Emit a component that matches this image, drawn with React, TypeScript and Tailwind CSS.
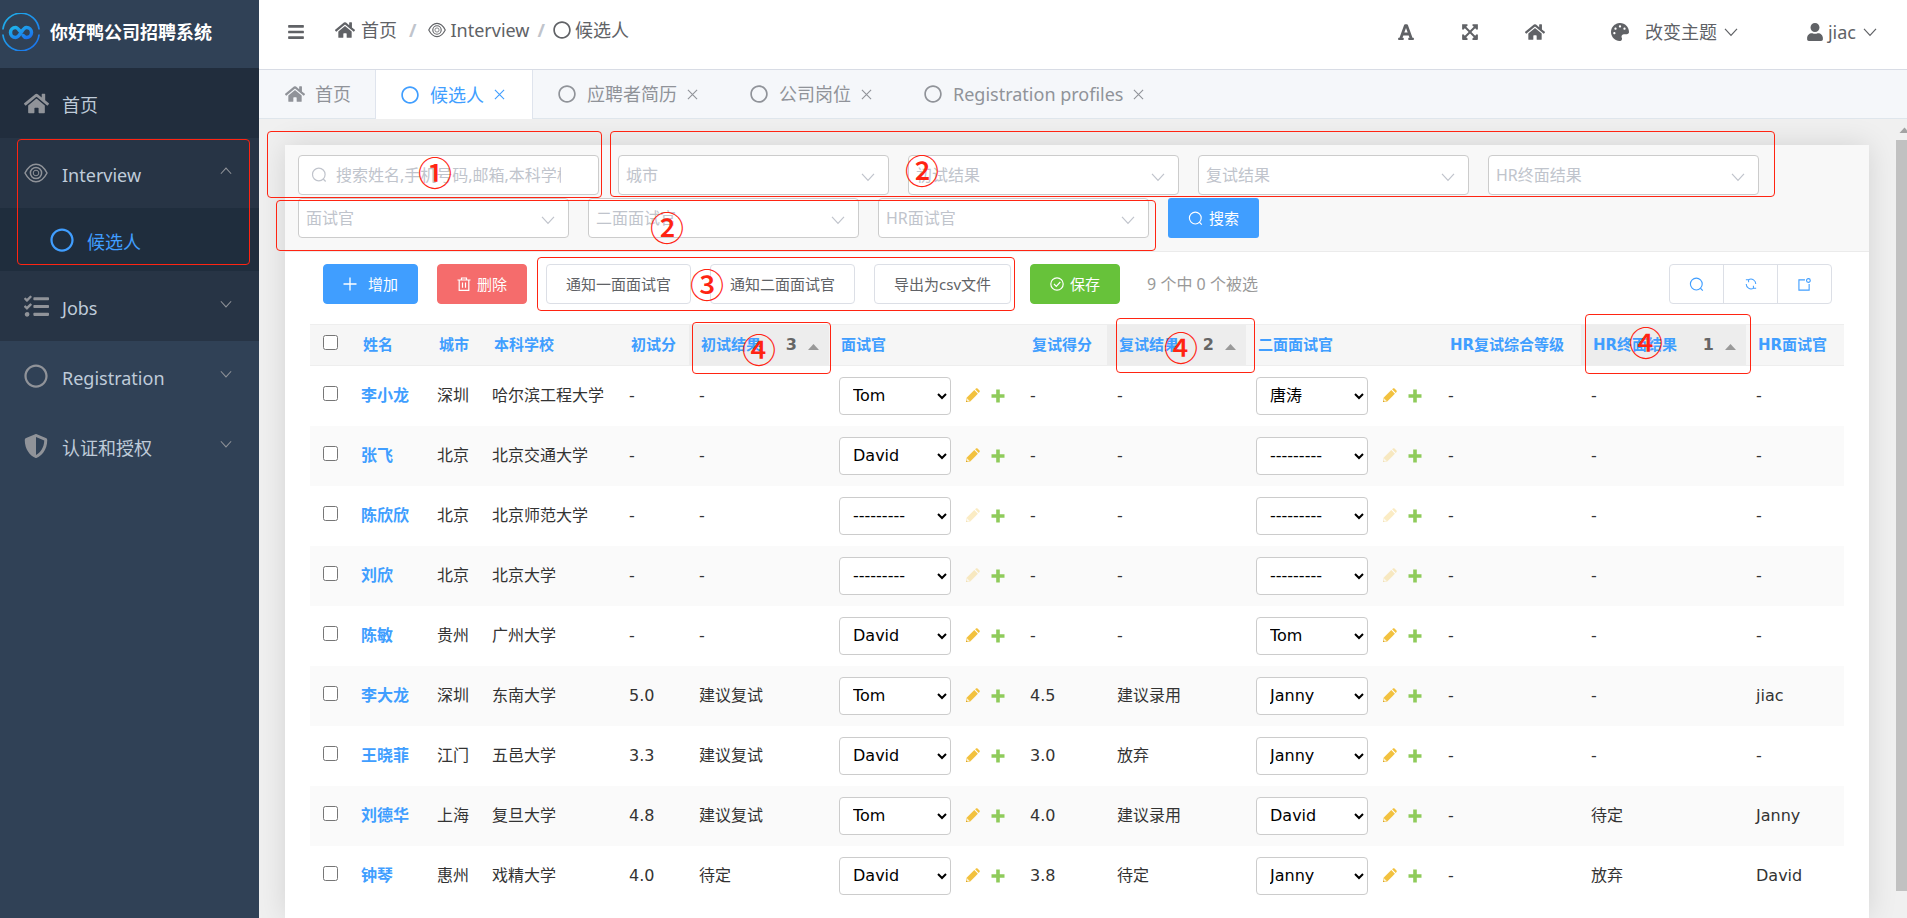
import type { ReactNode } from 'react';
import {
  FaBars,
  FaExpandArrowsAlt,
  FaFont,
  FaHome,
  FaPalette,
  FaRegCircle,
  FaShieldAlt,
  FaTasks,
  FaUser,
} from 'react-icons/fa';

type IconProps = { className?: string };

function Chevron({ className = '' }: IconProps) {
  return (
    <svg viewBox="0 0 14 14" className={className} fill="none" stroke="currentColor" strokeWidth="1.200" aria-hidden="true">
      <path d="M1 3.800 7 10.400 13 3.800" />
    </svg>
  );
}

function EyeIcon({ className = '' }: IconProps) {
  return (
    <svg viewBox="0 0 24 24" className={className} fill="none" stroke="currentColor" strokeWidth="1.500" aria-hidden="true">
      <path d="M1 12C4 6.200 7.800 3.200 12 3.200S20 6.200 23 12c-3 5.800-6.800 8.800-11 8.800S4 17.800 1 12z" />
      <circle cx="12" cy="12" r="5.600" />
      <circle cx="12" cy="12" r="2.800" strokeWidth="1" />
    </svg>
  );
}

function SearchIcon({ className = '' }: IconProps) {
  return (
    <svg viewBox="0 0 16 16" className={className} fill="none" stroke="currentColor" strokeWidth="1.200" aria-hidden="true">
      <circle cx="7.800" cy="7.500" r="6.300" />
      <path d="m12.200 12 2.500 2.500" />
    </svg>
  );
}

function CloseIcon({ className = '' }: IconProps) {
  return (
    <svg viewBox="0 0 12 12" className={className} fill="none" stroke="currentColor" strokeWidth="1.200" aria-hidden="true">
      <path d="m1 1 10 10M11 1 1 11" />
    </svg>
  );
}

function PlusIcon({ className = '' }: IconProps) {
  return (
    <svg viewBox="0 0 14 14" className={className} fill="none" stroke="currentColor" strokeWidth="1.300" aria-hidden="true">
      <path d="M7 .5v13M.5 7h13" />
    </svg>
  );
}

function TrashIcon({ className = '' }: IconProps) {
  return (
    <svg viewBox="0 0 14 14" className={className} fill="none" stroke="currentColor" strokeWidth="1.200" aria-hidden="true">
      <path d="M.5 3h13M4.500 3V1h5v2M2.200 3v10.300h9.600V3M5.500 5.500v5.300M8.500 5.500v5.300" />
    </svg>
  );
}

function CheckCircleIcon({ className = '' }: IconProps) {
  return (
    <svg viewBox="0 0 14 14" className={className} fill="none" stroke="currentColor" strokeWidth="1.200" aria-hidden="true">
      <circle cx="7" cy="7" r="6.200" />
      <path d="m4 7 2.300 2.300L10.300 5" />
    </svg>
  );
}

function RefreshIcon({ className = '' }: IconProps) {
  return (
    <svg viewBox="0 0 14 14" className={className} fill="none" stroke="currentColor" strokeWidth="1.200" aria-hidden="true">
      <path d="M4.500 1.800A5.800 5.800 0 0 1 12.600 7M9.500 12.200A5.800 5.800 0 0 1 1.400 7M1 2h3.200v3M13 12H9.800V9" />
    </svg>
  );
}

function ShareIcon({ className = '' }: IconProps) {
  return (
    <svg viewBox="0 0 14 14" className={className} fill="none" stroke="currentColor" strokeWidth="1.200" aria-hidden="true">
      <path d="M7.500 2H1v11h11V6.500" />
      <circle cx="11.200" cy="2.700" r="2" />
    </svg>
  );
}

function PencilIcon({ className = '' }: IconProps) {
  return (
    <svg viewBox="0 0 15 15" className={className} aria-hidden="true">
      <path d="M1 14l.6-4.200L9.300 2.100l3.600 3.600-7.700 7.700z" fill="#f2c13e" />
      <path d="M10.100 1.300 11 .5c.5-.5 1-.5 1.500 0l2 2c.5.500.5 1 0 1.500l-.8.900z" fill="#f2c13e" />
      <path d="M1.900 10.300 4.700 13l-2.600.600-.7-.7z" fill="#fdf3d3" />
      <path d="M1 14l.3-1.700 1.400 1.400z" fill="#d69f1e" />
    </svg>
  );
}

function AddIcon({ className = '' }: IconProps) {
  return (
    <svg viewBox="0 0 14 14" className={className} aria-hidden="true">
      <path d="M5.200.5h3.600v4.700h4.700v3.600H8.800v4.700H5.200V8.800H.5V5.200h4.700z" fill="#8fcb5b" />
    </svg>
  );
}

function Logo() {
  return (
    <svg viewBox="0 0 38 38" className="h-[38px] w-[38px] shrink-0" fill="none" aria-hidden="true">
      <defs>
        <linearGradient id="logo" x1="0" y1="0" x2="1" y2="1">
          <stop offset="0" stopColor="#1fb4ea" />
          <stop offset="1" stopColor="#1a6fee" />
        </linearGradient>
      </defs>
      <path
        d="M.9 16.500A18.200 18.200 0 0 1 37.100 16.500M37.100 21.500A18.200 18.200 0 0 1 .9 21.500"
        stroke="url(#logo)"
        strokeWidth="1.700"
      />
      <path
        d="M19 19.500c-2.200-3-3.400-5-5.500-5a5 5 0 0 0 0 10c2.400 0 3.800-2 5.500-4.800s3-5.200 5.500-5.200a5 5 0 0 1 0 10c-1.300 0-2.600-.8-3.300-2"
        stroke="url(#logo)"
        strokeWidth="3.500"
        strokeLinecap="round"
      />
    </svg>
  );
}

function MenuItem({ icon, label, open, className = '' }: { icon: ReactNode; label: string; open?: boolean; className?: string }) {
  return (
    <a href="#" className={`flex h-[70px] items-center pr-[27px] pl-6 text-lg text-[#bfcbd9] ${className}`}>
      <span className="flex w-[38px] text-[25px] text-[#909399]">{icon}</span>
      <span className="grow pt-1">{label}</span>
      {open !== undefined && <Chevron className={`mb-1 size-3 text-[#909399] ${open ? 'rotate-180' : ''}`} />}
    </a>
  );
}

function Sidebar() {
  return (
    <aside className="w-[259px] shrink-0 bg-[#304156]">
      <div className="flex h-[68px] items-center gap-[10px] pb-1 pl-[2px] text-lg font-bold whitespace-nowrap text-white">
        <Logo />
        <span>你好鸭公司招聘系统</span>
      </div>
      <nav>
        <MenuItem icon={<FaHome />} label="首页" className="bg-[#212d3d]" />
        <MenuItem icon={<EyeIcon className="size-6" />} label="Interview" open className="bg-[#273445]" />
        <a href="#" className="flex h-[63px] items-center bg-[#1f2d3d] pl-[50px] text-lg text-[#409eff]">
          <FaRegCircle className="mr-[13px] size-6" />
          <span className="pt-1">候选人</span>
        </a>
        <MenuItem icon={<FaTasks />} label="Jobs" open={false} className="bg-[#273445]" />
        <MenuItem icon={<FaRegCircle className="size-6" />} label="Registration" open={false} />
        <MenuItem icon={<FaShieldAlt className="size-6" />} label="认证和授权" open={false} />
      </nav>
    </aside>
  );
}

function Header() {
  return (
    <header className="flex h-[70px] items-center border-b border-[#d8dce5] bg-white pr-[30px] pb-1.5 pl-7 text-lg text-[#606266]">
      <button type="button" aria-label="Menu" className="mr-[30px] text-lg">
        <FaBars />
      </button>
      <nav className="flex items-center pb-1">
        <FaHome className="mr-1.5 text-xl" />
        <span>首页</span>
        <span className="mx-3 font-bold text-[#c0c4cc]">/</span>
        <EyeIcon className="mr-1 size-[18px]" />
        <span>Interview</span>
        <span className="mx-2 font-bold text-[#c0c4cc]">/</span>
        <FaRegCircle className="mr-1 size-[18px]" />
        <span>候选人</span>
      </nav>
      <div className="ml-auto flex items-center">
        <button type="button" aria-label="Font size" className="mr-[46px] text-lg">
          <FaFont />
        </button>
        <button type="button" aria-label="Full screen" className="mr-[46px] text-lg">
          <FaExpandArrowsAlt />
        </button>
        <button type="button" aria-label="Home" className="mr-[66px] text-xl">
          <FaHome />
        </button>
        <button type="button" className="mr-[68px] flex items-center">
          <FaPalette className="mr-4" />
          改变主题
          <Chevron className="ml-[7px] size-[14px]" />
        </button>
        <button type="button" className="flex items-center">
          <FaUser className="mr-1" />
          jiac
          <Chevron className="ml-[7px] size-[14px]" />
        </button>
      </div>
    </header>
  );
}

const tabs = ['候选人', '应聘者简历', '公司岗位', 'Registration profiles'];

function Tabs() {
  return (
    <div className="flex h-[49px] items-stretch border-b border-[#dfe6ec] bg-[#f5f7fa] text-lg text-[#909399]">
      <button type="button" className="flex items-center pr-6 pl-[26px]">
        <FaHome className="mr-2.5 text-xl" />
        首页
      </button>
      {tabs.map((tab, i) => (
        <button
          type="button"
          key={tab}
          className={
            i === 0
              ? '-mb-px flex items-center border-x border-[#dfe4ed] bg-white pr-[27px] pl-[25px] text-[#409eff]'
              : 'flex items-center pr-[27px] pl-[25px]'
          }
        >
          <FaRegCircle className="mr-[11px] size-[18px]" />
          {tab}
          <CloseIcon className="ml-2.5 size-[11px]" />
        </button>
      ))}
    </div>
  );
}

const filters = ['城市', '初试结果', '复试结果', 'HR终面结果', '面试官', '二面面试官', 'HR面试官'];

function Filters() {
  return (
    <form className="flex flex-wrap gap-x-[19px] gap-y-[3px] border-b border-[#ebebeb] bg-[#f8f8f8] pt-2.5 pr-3 pb-[13px] pl-[13px]">
      <label className="relative block">
        <SearchIcon className="absolute top-3 left-[13px] size-4 text-[#c0c4cc]" />
        <input
          type="text"
          aria-label="搜索"
          placeholder="搜索姓名,手机号码,邮箱,本科学校"
          className="h-10 w-[301px] rounded border border-[#ccc] bg-white px-[37px] text-base placeholder:text-[#c0c4cc]"
        />
      </label>
      {filters.map((name) => (
        <label key={name} className="relative block">
          <select
            aria-label={name}
            className="h-10 w-[271px] appearance-none rounded border border-[#ccc] bg-white pl-[7px] text-base text-[#c0c4cc]"
          >
            <option>{name}</option>
          </select>
          <Chevron className="pointer-events-none absolute top-[15px] right-[14px] size-[14px] text-[#c0c4cc]" />
        </label>
      ))}
      <button
        type="button"
        className="flex h-10 items-center gap-1.5 rounded-[3px] bg-[#409eff] px-5 text-[15px] text-white"
      >
        <SearchIcon className="size-[15px]" />
        搜索
      </button>
    </form>
  );
}

function ActionButton({ icon, children, className }: { icon?: ReactNode; children: ReactNode; className: string }) {
  return (
    <button type="button" className={`flex h-10 items-center rounded border px-[19px] text-[15px] ${className}`}>
      {icon}
      {children}
    </button>
  );
}

function Toolbar() {
  return (
    <div className="flex items-center gap-[19px] pt-3 pr-[37px] pb-5 pl-[38px]">
      <ActionButton icon={<PlusIcon className="mr-[11px] size-[14px]" />} className="border-[#409eff] bg-[#409eff] text-white">
        增加
      </ActionButton>
      <ActionButton icon={<TrashIcon className="mr-1.5 size-[14px]" />} className="border-[#f56c6c] bg-[#f56c6c] text-white">
        删除
      </ActionButton>
      <ActionButton className="border-[#dcdfe6] bg-white text-[#606266]">通知一面面试官</ActionButton>
      <ActionButton className="border-[#dcdfe6] bg-white text-[#606266]">通知二面面试官</ActionButton>
      <ActionButton className="border-[#dcdfe6] bg-white text-[#606266]">导出为csv文件</ActionButton>
      <ActionButton icon={<CheckCircleIcon className="mr-1.5 size-[14px]" />} className="border-[#67c23a] bg-[#67c23a] text-white">
        保存
      </ActionButton>
      <span className="ml-2 text-base text-[#999]">9 个中 0 个被选</span>
      <div className="ml-auto flex h-10 divide-x divide-[#dcdfe6] rounded border border-[#dcdfe6] text-[#409eff]">
        <button type="button" aria-label="搜索" className="flex w-[54px] items-center justify-center">
          <SearchIcon className="size-[15px]" />
        </button>
        <button type="button" aria-label="刷新" className="flex w-[54px] items-center justify-center">
          <RefreshIcon className="size-[12px]" />
        </button>
        <button type="button" aria-label="新窗口" className="flex w-[53px] items-center justify-center">
          <ShareIcon className="size-[13px]" />
        </button>
      </div>
    </div>
  );
}

type Column = { label: string; width: string; order?: number };

const columns: Column[] = [
  { label: '姓名', width: 'w-[76px]' },
  { label: '城市', width: 'w-[55px]' },
  { label: '本科学校', width: 'w-[137px]' },
  { label: '初试分', width: 'w-[70px]' },
  { label: '初试结果', width: 'w-[140px]', order: 3 },
  { label: '面试官', width: 'w-[191px]' },
  { label: '复试得分', width: 'w-[87px]' },
  { label: '复试结果', width: 'w-[139px]', order: 2 },
  { label: '二面面试官', width: 'w-[192px]' },
  { label: 'HR复试综合等级', width: 'w-[143px]' },
  { label: 'HR终面结果', width: 'w-[165px]', order: 1 },
  { label: 'HR面试官', width: 'w-[98px]' },
];

const NONE = '---------';
const interviewers = [NONE, 'Tom', 'David', 'Janny', '唐涛'];

const rows = [
  ['李小龙', '深圳', '哈尔滨工程大学', '-', '-', 'Tom', '-', '-', '唐涛', '-', '-', '-'],
  ['张飞', '北京', '北京交通大学', '-', '-', 'David', '-', '-', NONE, '-', '-', '-'],
  ['陈欣欣', '北京', '北京师范大学', '-', '-', NONE, '-', '-', NONE, '-', '-', '-'],
  ['刘欣', '北京', '北京大学', '-', '-', NONE, '-', '-', NONE, '-', '-', '-'],
  ['陈敏', '贵州', '广州大学', '-', '-', 'David', '-', '-', 'Tom', '-', '-', '-'],
  ['李大龙', '深圳', '东南大学', '5.0', '建议复试', 'Tom', '4.5', '建议录用', 'Janny', '-', '-', 'jiac'],
  ['王晓菲', '江门', '五邑大学', '3.3', '建议复试', 'David', '3.0', '放弃', 'Janny', '-', '-', '-'],
  ['刘德华', '上海', '复旦大学', '4.8', '建议复试', 'Tom', '4.0', '建议录用', 'David', '-', '待定', 'Janny'],
  ['钟琴', '惠州', '戏精大学', '4.0', '待定', 'David', '3.8', '待定', 'Janny', '-', '放弃', 'David'],
];

function InterviewerCell({ value, label }: { value: string; label: string }) {
  return (
    <div className="flex items-center">
      <select
        aria-label={label}
        defaultValue={value}
        className="mr-[14px] h-[38px] w-[112px] rounded border border-[#ccc] bg-white pl-[9px] text-base text-black"
      >
        {interviewers.map((name) => (
          <option key={name}>{name}</option>
        ))}
      </select>
      <a href="#" aria-label="编辑" className={value === NONE ? 'mr-[11px] opacity-30' : 'mr-[11px]'}>
        <PencilIcon className="size-[15px]" />
      </a>
      <a href="#" aria-label="新增">
        <AddIcon className="size-[14px]" />
      </a>
    </div>
  );
}

function CandidateTable() {
  return (
    <table className="w-full table-fixed border-collapse text-left font-['DejaVu_Sans','Noto_Sans_CJK_SC',sans-serif] whitespace-nowrap">
      <colgroup>
        <col className="w-[41px]" />
        {columns.map((c) => (
          <col key={c.label} className={c.width} />
        ))}
      </colgroup>
      <thead>
        <tr className="h-[41px] border-y border-[#eee] bg-[#f6f6f6] text-[15px] text-[#409eff]">
          <th className="pl-[13px]">
            <input type="checkbox" aria-label="全选" className="mb-1.5 block size-[15px]" />
          </th>
          {columns.map((c) => (
            <th key={c.label} className={c.order ? 'bg-[#ededed] pl-3' : 'pl-3'}>
              <div className="flex items-center">
                <a href="#">{c.label}</a>
                {c.order && (
                  <span className="mr-2.5 ml-auto flex items-center gap-[11px] text-base text-[#666]">
                    {c.order}
                    <svg viewBox="0 0 11 6" className="mt-1 h-1.5 w-[11px]" aria-hidden="true">
                      <path d="M5.500 0 11 6H0z" fill="#999" />
                    </svg>
                  </span>
                )}
              </div>
            </th>
          ))}
        </tr>
      </thead>
      <tbody>
        {rows.map((row) => (
          <tr key={row[0]} className="h-[60px] text-base text-[#333] even:bg-[#fafafa]">
            <td className="pl-[13px]">
              <input type="checkbox" aria-label={row[0]} className="mb-1 block size-[15px]" />
            </td>
            {row.map((value, i) => (
              <td key={columns[i].label} className="pl-2.5">
                {i === 0 ? (
                  <a href="#" className="font-bold text-[#409eff]">
                    {value}
                  </a>
                ) : i === 5 || i === 8 ? (
                  <InterviewerCell value={value} label={columns[i].label} />
                ) : (
                  value
                )}
              </td>
            ))}
          </tr>
        ))}
      </tbody>
    </table>
  );
}

const frames = [
  'left-[17px] top-[139px] h-[126px] w-[233px]',
  'left-[267px] top-[131px] h-[67px] w-[335px]',
  'left-[610px] top-[131px] h-[66px] w-[1165px]',
  'left-[276px] top-[200px] h-[51px] w-[880px]',
  'left-[537px] top-[257px] h-[54px] w-[478px]',
  'left-[692px] top-[322px] h-[52px] w-[139px]',
  'left-[1116px] top-[318px] h-[55px] w-[139px]',
  'left-[1585px] top-[314px] h-[60px] w-[166px]',
];

const marks = [
  ['①', 'left-[418px] top-[156px]'],
  ['②', 'left-[905px] top-[154px]'],
  ['②', 'left-[650px] top-[211px]'],
  ['③', 'left-[690px] top-[268px]'],
  ['④', 'left-[742px] top-[333px]'],
  ['④', 'left-[1164px] top-[331px]'],
  ['④', 'left-[1629px] top-[326px]'],
];

function Annotations() {
  return (
    <div className="pointer-events-none text-[34px] leading-[34px] font-medium text-[#ff2412]">
      {frames.map((place) => (
        <div key={place} className={`absolute rounded border border-[#ff2412] ${place}`} />
      ))}
      {marks.map(([mark, place]) => (
        <span key={place} className={`absolute ${place}`}>
          {mark}
        </span>
      ))}
    </div>
  );
}

function ScrollTrack() {
  return (
    <div className="flex w-[11px] shrink-0 flex-col overflow-hidden bg-[#f0f0f0]">
      <svg viewBox="0 0 11 21" className="h-[21px] w-[11px] shrink-0" aria-hidden="true">
        <path d="M3.500 14 8.500 8.500 13.500 14z" fill="#a3a3a3" />
      </svg>
      <div className="mb-[27px] grow bg-[#c1c1c1]" />
    </div>
  );
}

export default function App() {
  return (
    <div className="relative flex h-screen overflow-hidden bg-[#f0f0f0] font-['Noto_Sans','Noto_Sans_CJK_SC',sans-serif]">
      <Sidebar />
      <div className="flex min-w-0 grow flex-col">
        <Header />
        <Tabs />
        <div className="flex min-h-0 grow">
          <main className="min-w-0 grow overflow-hidden pt-[26px] pr-[27px] pl-[26px]">
            <div className="min-h-full bg-white shadow-[0_0_28px_rgba(0,0,0,0.12)]">
              <Filters />
              <Toolbar />
              <div className="px-[25px]">
                <CandidateTable />
              </div>
            </div>
          </main>
          <ScrollTrack />
        </div>
      </div>
      <Annotations />
    </div>
  );
}
